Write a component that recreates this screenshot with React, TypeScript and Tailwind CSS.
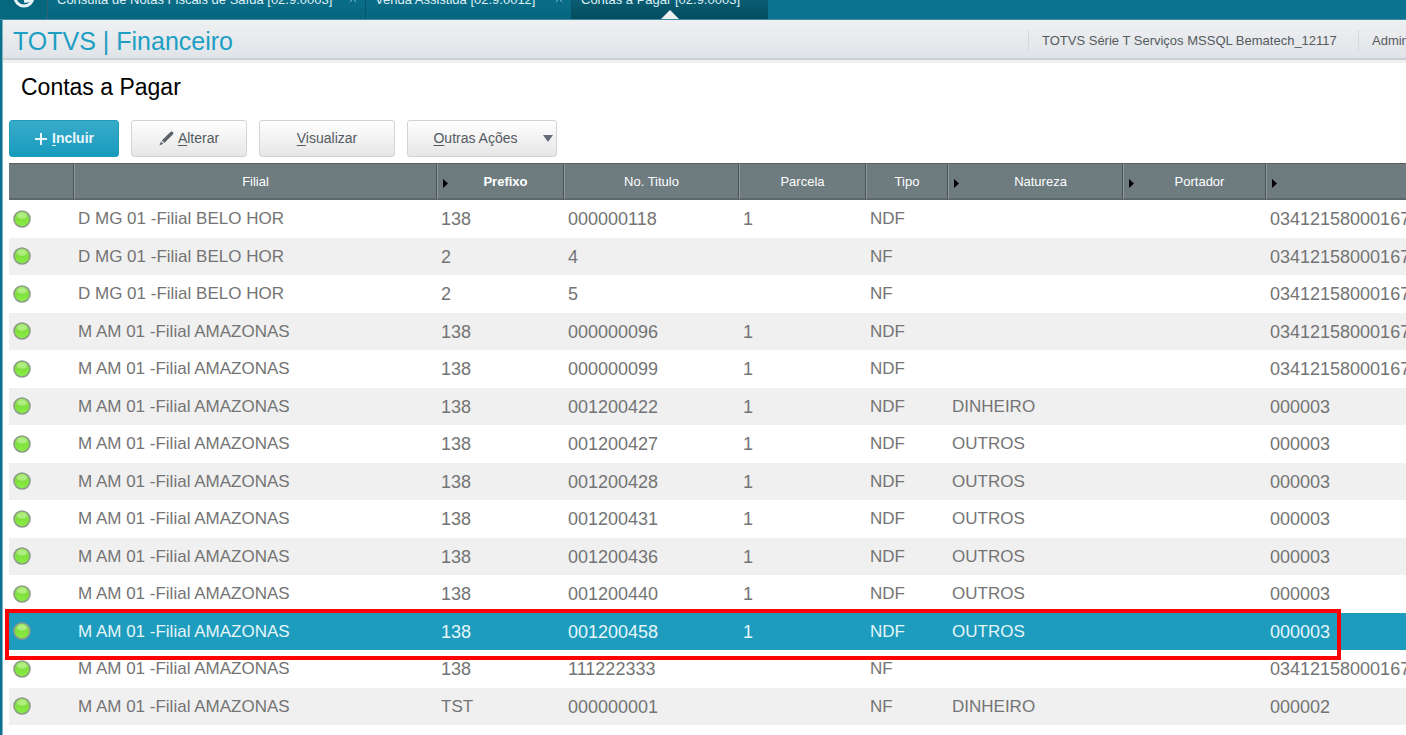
import type { ReactNode } from 'react';
import clsx from 'clsx';

interface Tab {
  label: string;
  width: string;
  active?: boolean;
}

interface Column {
  label: string;
  width: string;
  search?: boolean;
  sorted?: boolean;
}

const tabs: Tab[] = [
  { label: 'Consulta de Notas Fiscais de Saída [02.9.0003]', width: 'w-[318px]' },
  { label: 'Venda Assistida [02.9.0012]', width: 'w-[206px]' },
  { label: 'Contas a Pagar [02.9.0003]', width: 'w-[197px]', active: true },
];

const columns: Column[] = [
  { label: '', width: 'w-[65px]' },
  { label: 'Filial', width: 'w-[363px]' },
  { label: 'Prefixo', width: 'w-[127px]', search: true, sorted: true },
  { label: 'No. Titulo', width: 'w-[175px]' },
  { label: 'Parcela', width: 'w-[127px]' },
  { label: 'Tipo', width: 'w-[82px]' },
  { label: 'Natureza', width: 'w-[175px]', search: true },
  { label: 'Portador', width: 'w-[143px]', search: true },
  { label: '', width: 'w-auto', search: true },
];

const BH = 'D MG 01 -Filial BELO HOR';
const AM = 'M AM 01 -Filial AMAZONAS';

// filial, prefixo, titulo, parcela, tipo, natureza, portador, fornecedor
const rows: string[][] = [
  [BH, '138', '000000118', '1', 'NDF', '', '', '03412158000167'],
  [BH, '2', '4', '', 'NF', '', '', '03412158000167'],
  [BH, '2', '5', '', 'NF', '', '', '03412158000167'],
  [AM, '138', '000000096', '1', 'NDF', '', '', '03412158000167'],
  [AM, '138', '000000099', '1', 'NDF', '', '', '03412158000167'],
  [AM, '138', '001200422', '1', 'NDF', 'DINHEIRO', '', '000003'],
  [AM, '138', '001200427', '1', 'NDF', 'OUTROS', '', '000003'],
  [AM, '138', '001200428', '1', 'NDF', 'OUTROS', '', '000003'],
  [AM, '138', '001200431', '1', 'NDF', 'OUTROS', '', '000003'],
  [AM, '138', '001200436', '1', 'NDF', 'OUTROS', '', '000003'],
  [AM, '138', '001200440', '1', 'NDF', 'OUTROS', '', '000003'],
  [AM, '138', '001200458', '1', 'NDF', 'OUTROS', '', '000003'],
  [AM, '138', '111222333', '', 'NF', '', '', '03412158000167'],
  [AM, 'TST', '000000001', '', 'NF', 'DINHEIRO', '', '000002'],
];

const SELECTED = 11;

function StatusDot() {
  return (
    <svg className="w-[19px] h-[19px]" viewBox="0 0 19 19">
      <defs>
        <linearGradient id="dot" x1="0" y1="0" x2="0" y2="1">
          <stop offset="0%" stopColor="#a6ea70" />
          <stop offset="50%" stopColor="#7fe03c" />
          <stop offset="100%" stopColor="#8cf046" />
        </linearGradient>
      </defs>
      <circle cx="9" cy="9" r="8" fill="url(#dot)" stroke="#8c9c88" strokeWidth="1.6" />
      <ellipse cx="9" cy="6" rx="4.6" ry="2.8" fill="#d0f7b0" opacity="0.5" />
    </svg>
  );
}

function ToolButton({ width, children }: { width: string; children: ReactNode }) {
  return (
    <button
      className={clsx(
        'flex items-center justify-center h-[37px] rounded-[3px] border border-[#d3d3d3] bg-linear-to-b from-white to-[#e6e6e6] text-[14px] text-[#555a62]',
        width
      )}
    >
      {children}
    </button>
  );
}

export default function App() {
  return (
    <div className="min-h-screen flex flex-col overflow-hidden bg-[#0a708e] font-['Liberation_Sans',Arial,sans-serif]">
      {/* Abas abertas */}
      <nav className="flex h-5 overflow-hidden bg-[#0b728f] border-b border-[#3f8ca2] text-[13px] leading-[14px] text-[#dff0f5]">
        <button aria-label="Início" className="flex items-end w-12 pl-3 pb-[10px] bg-[#07677f] border-r border-[#2f6473]">
          <svg className="w-6 h-6 shrink-0" viewBox="0 0 24 24" fill="none" stroke="#e8f4f7" strokeWidth="3">
            <circle cx="12" cy="12" r="9" />
            <path d="M12 16l6-1 1-4" strokeWidth="4" />
          </svg>
        </button>
        {tabs.map((tab) => (
          <a
            key={tab.label}
            href="#"
            className={clsx(
              'relative flex items-end shrink-0 pl-[9px] pb-3 border-r whitespace-nowrap',
              tab.width,
              tab.active
                ? 'bg-linear-to-b from-[#0a5d72] to-[#044c5f] border-[#0a708e]'
                : 'bg-linear-to-b from-[#0a6d87] to-[#07657f] border-[#045569]'
            )}
          >
            {tab.label}
            {!tab.active && (
              <svg className="ml-auto mr-2 w-2 h-2 mb-1 opacity-60" viewBox="0 0 8 8" stroke="currentColor">
                <path d="M1 0l6 7M7 0L1 7" />
              </svg>
            )}
            {tab.active && (
              <svg className="absolute bottom-0 left-1/2 -translate-x-1/2 w-[18px] h-[9px]" viewBox="0 0 18 9">
                <path d="M0 9L9 0l9 9z" fill="#eef0f2" />
              </svg>
            )}
          </a>
        ))}
      </nav>

      <div className="flex-1 ml-[2px] border-l border-[#7fb3c2] bg-white">
        <header className="flex items-center justify-between h-10 pl-[10px] bg-linear-to-b from-[#eff0f2] to-[#e0e4e8] border-b-2 border-[#ccd1d6] overflow-hidden">
          <h1 className="pt-1 text-[25px] leading-7 text-[#1d9fc3]">TOTVS | Financeiro</h1>
          <div className="flex shrink-0 pt-1 text-[13px] leading-[22px] text-[#555a5e] whitespace-nowrap">
            <span className="w-[330px] pl-[13px] border-l border-[#d5d9dc]">TOTVS Série T Serviços MSSQL Bematech_12117</span>
            <span className="w-12 pl-[13px] border-l border-[#d5d9dc] overflow-hidden">Administrador</span>
          </div>
        </header>
        <div className="h-[3px] bg-[#f1f1f2]" />

        <h2 className="pl-[18px] pt-[11px] pb-5 text-[23px] leading-[26px] text-black">Contas a Pagar</h2>

        <div className="flex pl-[6px] gap-3">
          <button className="flex items-center justify-center gap-1 w-[110px] h-[37px] rounded-[3px] border border-[#1f9dbf] bg-linear-to-b from-[#38abca] to-[#149bbd] text-[14px] font-bold text-[#e9f7fb]">
            <svg className="w-[14px] h-[14px]" viewBox="0 0 14 14" stroke="currentColor" strokeWidth="2">
              <path d="M7 1v12M1 7h12" />
            </svg>
            <span>
              <u className="underline-offset-2">I</u>ncluir
            </span>
          </button>
          <ToolButton width="w-[116px]">
            <svg className="w-[15px] h-[15px] mr-1" viewBox="0 0 15 15" fill="#5d636b">
              <path d="M2.8 9.6L11.4 1a1.5 1.5 0 0 1 2.4 2.4L5.4 12zM2 10.6l2.2 2.2L.4 14.6z" />
            </svg>
            <span>
              <u className="underline-offset-2">A</u>lterar
            </span>
          </ToolButton>
          <ToolButton width="w-[136px]">
            <span>
              <u className="underline-offset-2">V</u>isualizar
            </span>
          </ToolButton>
          <ToolButton width="w-[150px]">
            <span className="flex-1 text-center">
              <u className="underline-offset-2">O</u>utras Ações
            </span>
            <svg className="w-[10px] h-[7px] mr-[3px]" viewBox="0 0 10 7">
              <path d="M0 0h10L5 7z" fill="#666b78" />
            </svg>
          </ToolButton>
        </div>

        {/* Títulos */}
        <div className="pl-[6px] pt-[6px]">
          <table className="w-full table-fixed border-separate border-spacing-0 text-left whitespace-nowrap">
            <thead>
              <tr className="h-[37px] bg-[#6e7c80] text-[13px] leading-[18px] text-white">
                {columns.map((col, i) => (
                  <th
                    key={i}
                    className={clsx(
                      'p-0 border-t border-b-2 border-t-[#595f61] border-b-[#5d6668]',
                      i < columns.length - 1 && 'border-r border-r-[#4b5355]',
                      i > 0 && 'border-l border-l-[#8e999c]',
                      col.width,
                      col.sorted ? 'font-bold' : 'font-normal'
                    )}
                  >
                    <div className="flex items-center pt-px">
                      {col.search && (
                        <svg className="w-[5px] h-[9px] ml-[5px] mt-[3px]" viewBox="0 0 5 9">
                          <path d="M0 0l5 4.5L0 9z" fill="#000" />
                        </svg>
                      )}
                      <span className="flex-1 text-center">{col.label}</span>
                    </div>
                  </th>
                ))}
              </tr>
            </thead>
            <tbody className="leading-[22px] text-[#747474]">
              {rows.map((row, i) => (
                <tr
                  key={i}
                  className={clsx(
                    'odd:h-[38px] even:h-[37px]',
                    i === SELECTED ? 'relative bg-[#1d9cbe] text-[#e6f5f9]' : 'even:bg-[#f0f0f0]'
                  )}
                >
                  <td className="p-0 pl-1">
                    <StatusDot />
                    {i === SELECTED && (
                      <span className="absolute -left-1 right-[65px] -top-1 -bottom-[10px] border-4 border-[#fd0202]" />
                    )}
                  </td>
                  {row.map((value, j) => (
                    <td
                      key={j}
                      className={clsx(
                        'p-0 pl-1 overflow-hidden',
                        /^\d+$/.test(value) ? 'text-[18px]' : 'text-[17px]'
                      )}
                    >
                      {value}
                    </td>
                  ))}
                </tr>
              ))}
            </tbody>
          </table>
        </div>
      </div>
    </div>
  );
}
